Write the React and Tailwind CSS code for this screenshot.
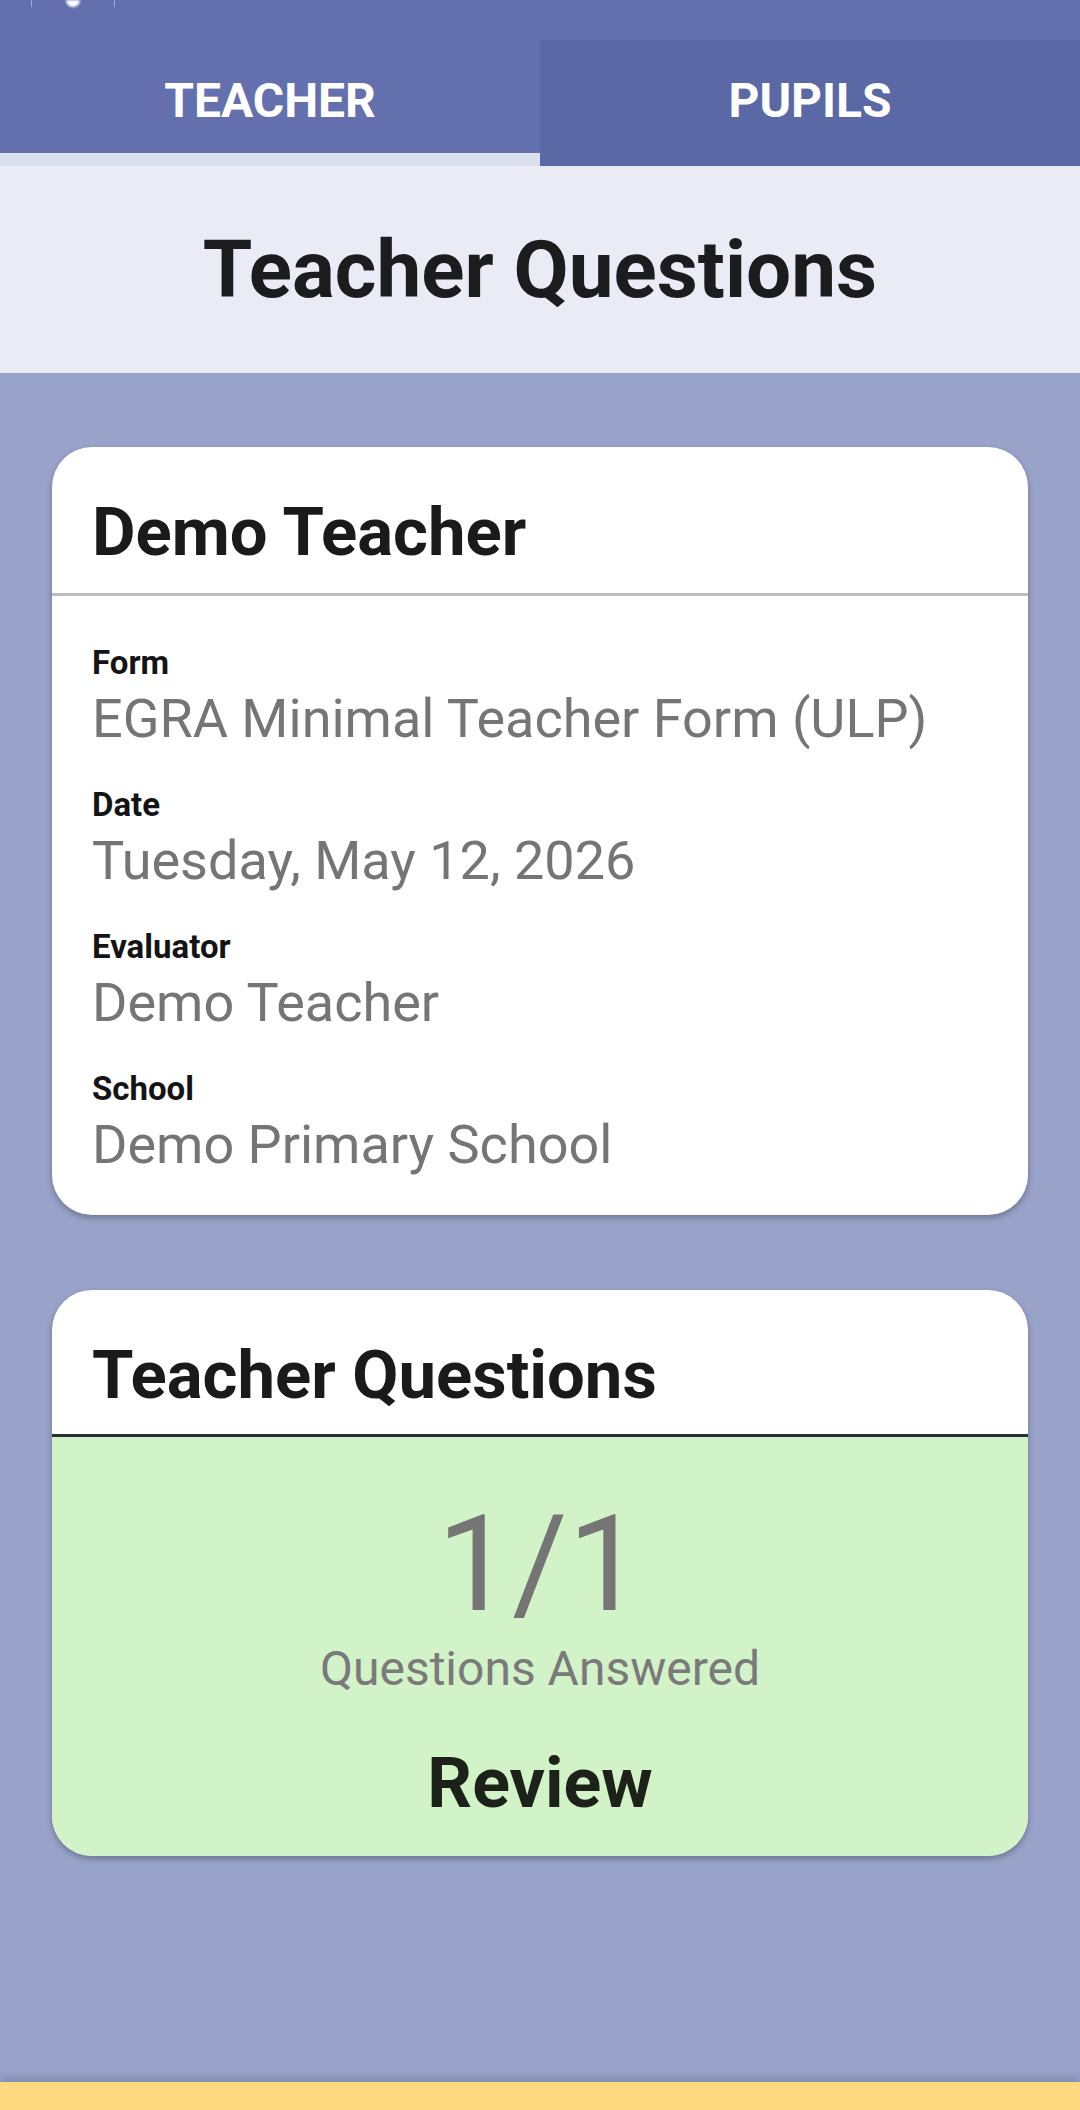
import React from 'react';

const details = [
  { label: 'Form', value: 'EGRA Minimal Teacher Form (ULP)' },
  { label: 'Date', value: 'Tuesday, May 12, 2026' },
  { label: 'Evaluator', value: 'Demo Teacher' },
  { label: 'School', value: 'Demo Primary School' },
];

const Tab = ({ label, active }) => (
  <div className={`flex-1 flex flex-col ${active ? 'bg-[#6470ae]' : 'bg-[#5a68a5]'}`}>
    <div className="flex-1 pt-[33px] text-center text-white text-[48px] leading-[56px] font-bold">{label}</div>
    {active && <div className="h-[13px] bg-[#dde0ef]" />}
  </div>
);

const CardHeader = ({ title, h, line }) => (
  <>
    <div className={`${h} pt-[46px] px-[40px]`}>
      <h2 className="text-[67px] leading-[78px] font-bold text-[#1a1a1a]">{title}</h2>
    </div>
    <div className={`h-[3px] ${line}`} />
  </>
);

export default function App() {
  return (
    <div className="w-[1080px] h-[2110px] flex flex-col bg-[#99a2c9] font-['Roboto','Liberation_Sans',sans-serif]">
      {/* top strip, cut-off toolbar icon */}
      <div className="h-[40px] bg-[#6470ae] pl-[31px]">
        <div className="w-[84px] h-[7px] border-x border-white/40 flex justify-center">
          <div className="w-[14px] h-[7px] bg-white rounded-b-full blur-[1px]" />
        </div>
      </div>

      {/* tabs */}
      <div className="flex h-[126px]">
        <Tab label="TEACHER" active />
        <Tab label="PUPILS" />
      </div>

      {/* page title */}
      <div className="h-[207px] bg-[#eaebf5] pt-[57px] text-center">
        <h1 className="text-[80px] leading-[94px] font-bold text-[#1c1c1f]">Teacher Questions</h1>
      </div>

      <div className="flex-1 px-[52px] pt-[74px] flex flex-col gap-[75px]">
        {/* teacher details */}
        <div className="bg-white rounded-[40px] overflow-hidden shadow-[0_3px_6px_rgba(0,0,0,0.28)]">
          <CardHeader title="Demo Teacher" h="h-[146px]" line="bg-[#bdbdbd]" />
          <div className="pt-[48px] pb-[39px] px-[40px] flex flex-col gap-[36px]">
            {details.map((d) => (
              <div key={d.label} className="flex flex-col">
                <span className="text-[33px] leading-[38px] font-bold text-[#141414]">{d.label}</span>
                <span className="mt-[6px] text-[54px] leading-[62px] text-[#757575]">{d.value}</span>
              </div>
            ))}
          </div>
        </div>

        {/* questions summary */}
        <div className="bg-white rounded-[40px] overflow-hidden shadow-[0_3px_6px_rgba(0,0,0,0.28)]">
          <CardHeader title="Teacher Questions" h="h-[144px]" line="bg-[#263033]" />
          <div className="bg-[#d2f2c8] pt-[61px] pb-[32px] flex flex-col items-center">
            <span className="text-[134px] leading-[134px] text-[#757575]">1/1</span>
            <span className="mt-[9px] text-[48px] leading-[56px] text-[#7a7a7a]">Questions Answered</span>
            <button className="mt-[45px] text-[70px] leading-[82px] font-bold text-[#1c2119]">Review</button>
          </div>
        </div>
      </div>

      <div className="h-[28px] bg-[#ffd97f] shadow-[0_-4px_8px_rgba(0,0,0,0.15)]" />
    </div>
  );
}
